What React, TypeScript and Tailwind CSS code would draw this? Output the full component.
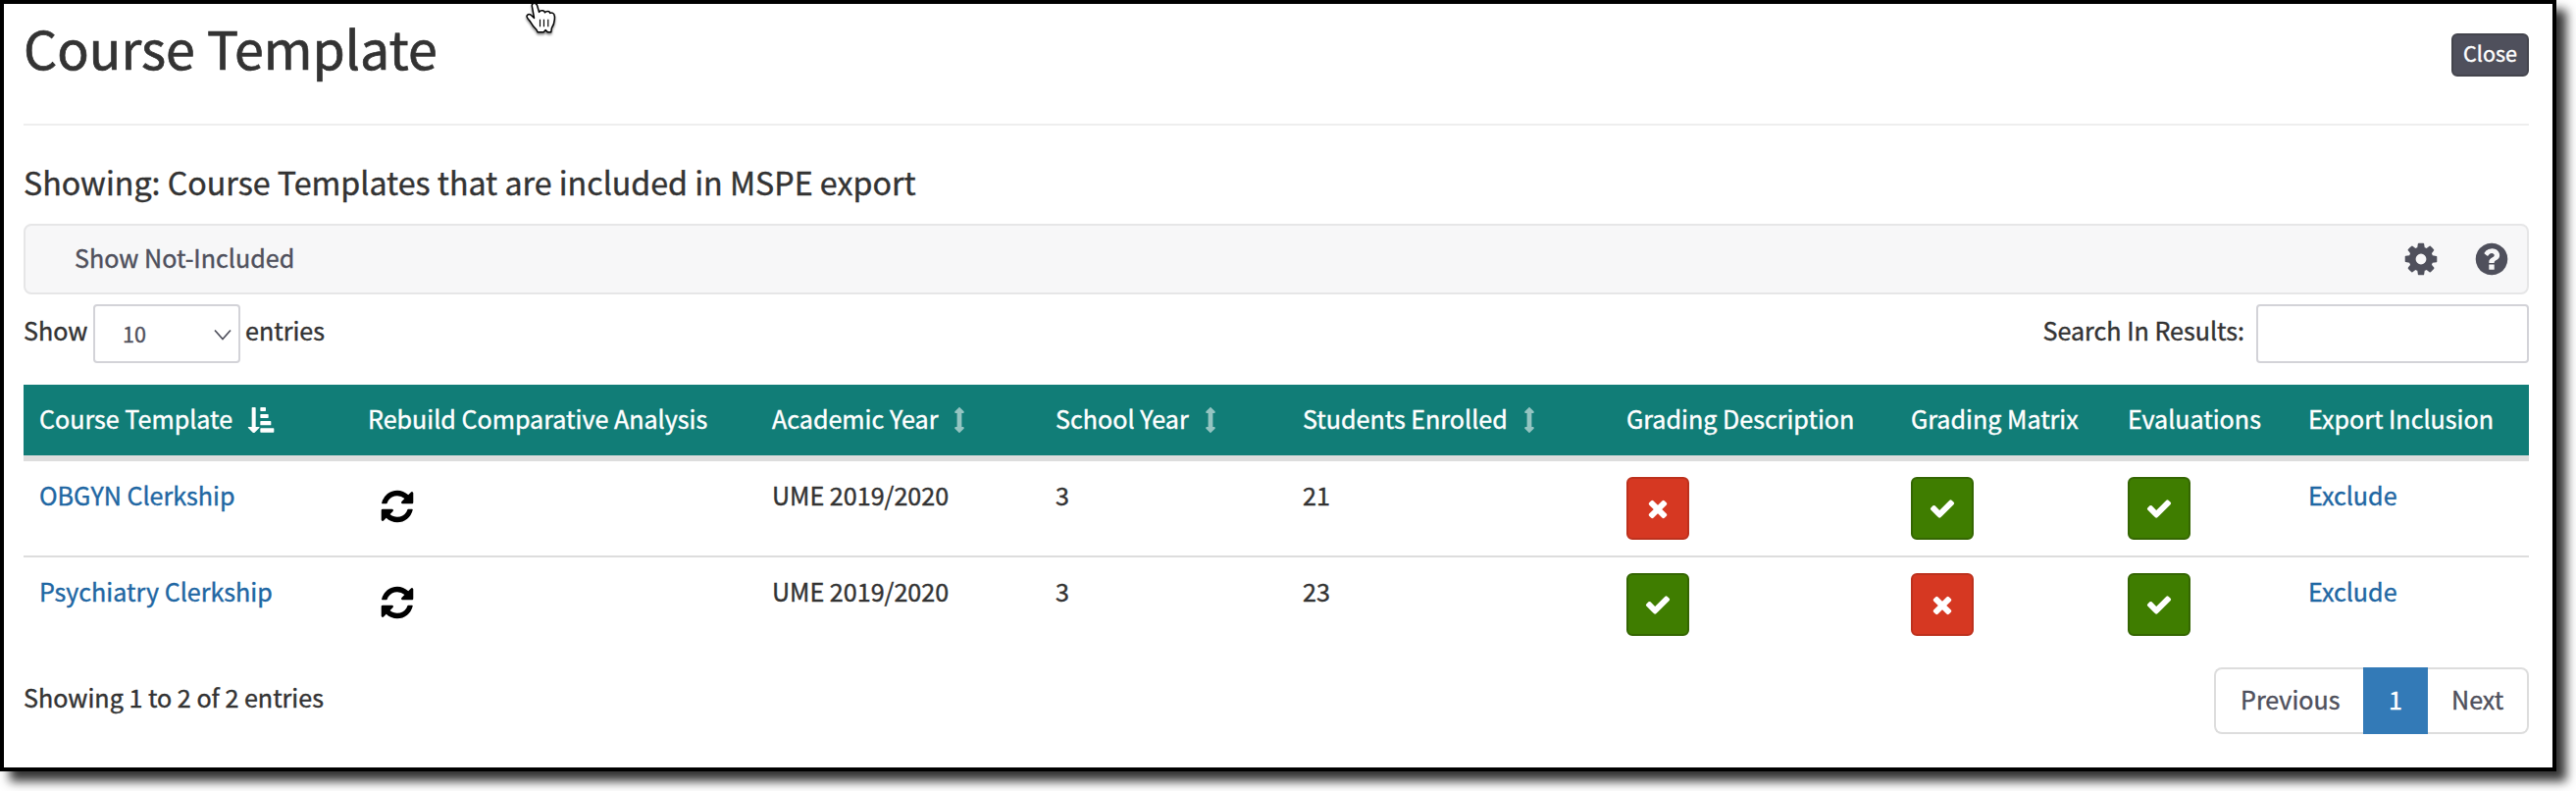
import React from "react";

interface iIcon {
  d: string;
  className: string;
}

interface iColumn {
  label: string;
  width: string;
  sort?: "active" | "idle";
}

interface iRow {
  id: number;
  name: string;
  year: string;
  schoolYear: number;
  enrolled: number;
  description: boolean;
  matrix: boolean;
  evaluations: boolean;
}

const COG =
  "M1152 896q0-106-75-181t-181-75-181 75-75 181 75 181 181 75 181-75 75-181zm512-109v222q0 12-8 23t-20 13l-185 28q-19 54-39 91 35 50 107 138 10 12 10 25t-9 23q-27 37-99 108t-94 71q-12 0-26-9l-138-108q-44 23-91 38-16 136-29 186-7 28-36 28h-222q-14 0-24.5-8.5t-11.5-21.5l-28-184q-49-16-90-37l-141 107q-10 9-25 9-14 0-25-11-126-114-165-168-7-10-7-23 0-12 8-23 15-21 51-66.5t54-70.5q-27-50-41-99l-183-27q-13-2-21-12.5t-8-23.5v-222q0-12 8-23t19-13l186-28q14-46 39-92-40-57-107-138-10-12-10-24 0-10 9-23 26-36 98.5-107.5t94.5-71.5q13 0 26 10l138 107q44-23 91-38 16-136 29-186 7-28 36-28h222q14 0 24.5 8.5t11.5 21.5l28 184q49 16 90 37l142-107q9-9 24-9 13 0 25 10 129 119 165 170 7 8 7 22 0 12-8 23-15 21-51 66.5t-54 70.5q26 50 41 98l183 28q13 2 21 12.5t8 23.5z";
const QUESTION =
  "M1024 1376v-192q0-14-9-23t-23-9h-192q-14 0-23 9t-9 23v192q0 14 9 23t23 9h192q14 0 23-9t9-23zm256-672q0-88-55.5-163t-138.5-116-170-41q-243 0-371 213-15 24 8 42l132 100q7 6 19 6 16 0 25-12 53-68 86-92 34-24 86-24 48 0 85.5 26t37.5 59q0 38-20 61t-68 45q-63 28-115.5 86.5t-52.5 125.5v36q0 14 9 23t23 9h192q14 0 23-9t9-23q0-19 21.5-49.5t54.5-49.5q32-18 49-28.5t46-35 44.5-48 28-60.5 12.5-81zm384 192q0 209-103 385.5t-279.5 279.5-385.5 103-385.5-103-279.5-279.5-103-385.5 103-385.5 279.5-279.5 385.5-103 385.5 103 279.5 279.5 103 385.5z";
const REFRESH =
  "M1639 1056q0 5-1 7-64 268-268 434.5t-478 166.5q-146 0-282.5-55t-243.5-157l-129 129q-19 19-45 19t-45-19-19-45v-448q0-26 19-45t45-19h448q26 0 45 19t19 45-19 45l-137 137q71 66 161 102t187 36q134 0 250-65t186-179q11-17 53-117 8-23 30-23h192q13 0 22.5 9.5t9.5 22.5zm25-800v448q0 26-19 45t-45 19h-448q-26 0-45-19t-19-45 19-45l138-138q-148-137-349-137-134 0-250 65t-186 179q-11 17-53 117-8 23-30 23h-199q-13 0-22.5-9.5t-9.5-22.5v-7q65-268 270-434.5t480-166.5q146 0 284 55.5t245 156.5l130-129q19-19 45-19t45 19 19 45z";
const CHECK =
  "M1671 566q0 40-28 68l-724 724-136 136q-28 28-68 28t-68-28l-136-136-362-362q-28-28-28-68t28-68l136-136q28-28 68-28t68 28l294 295 656-657q28-28 68-28t68 28l136 136q28 28 28 68z";
const TIMES =
  "M1490 1322q0 40-28 68l-136 136q-28 28-68 28t-68-28l-294-294-294 294q-28 28-68 28t-68-28l-136-136q-28-28-28-68t28-68l294-294-294-294q-28-28-28-68t28-68l136-136q28-28 68-28t68 28l294 294 294-294q28-28 68-28t68 28l136 136q28 28 28 68t-28 68l-294 294 294 294q28 28 28 68z";

const columns: iColumn[] = [
  { label: "Course Template", width: "w-[335px]", sort: "active" },
  { label: "Rebuild Comparative Analysis", width: "w-[412px]" },
  { label: "Academic Year", width: "w-[289px]", sort: "idle" },
  { label: "School Year", width: "w-[252px]", sort: "idle" },
  { label: "Students Enrolled", width: "w-[330px]", sort: "idle" },
  { label: "Grading Description", width: "w-[290px]" },
  { label: "Grading Matrix", width: "w-[221px]" },
  { label: "Evaluations", width: "w-[184px]" },
  { label: "Export Inclusion", width: "w-[241px]" },
];

const rows: iRow[] = [
  {
    id: 1,
    name: "OBGYN Clerkship",
    year: "UME 2019/2020",
    schoolYear: 3,
    enrolled: 21,
    description: false,
    matrix: true,
    evaluations: true,
  },
  {
    id: 2,
    name: "Psychiatry Clerkship",
    year: "UME 2019/2020",
    schoolYear: 3,
    enrolled: 23,
    description: true,
    matrix: false,
    evaluations: true,
  },
];

const Icon: React.FC<iIcon> = ({ d, className }) => (
  <svg viewBox="0 0 1792 1792" fill="currentColor" className={className}>
    <path d={d} />
  </svg>
);

const SortActive: React.FC = () => (
  <svg viewBox="36 42 84 84" fill="currentColor" className="h-7 w-7">
    <path d="M50 47q0-2 2-2h8q2 0 2 2v58h10q3 0 1 3l-14 14q-3 2-6 0l-14-14q-2-3 1-3h10z" />
    <rect x="76" y="45" width="17" height="12" rx="2" />
    <rect x="76" y="66" width="25" height="12" rx="2" />
    <rect x="76" y="87" width="33" height="13" rx="2" />
    <rect x="76" y="109" width="42" height="13" rx="2" />
  </svg>
);

const SortIdle: React.FC = () => (
  <svg viewBox="0 0 12 28" fill="currentColor" className="ml-px h-7 w-3 opacity-55">
    <path d="M6 .8 10.6 5.2Q11.2 7 9.8 7H8.4V21H9.8Q11.2 21 10.6 22.8L6 27.2 1.4 22.8Q.8 21 2.2 21H3.6V7H2.2Q.8 7 1.4 5.2Z" />
  </svg>
);

const Status: React.FC<{ ok: boolean }> = ({ ok }) => (
  <button
    className={`flex h-16 w-16 items-center justify-center rounded-md border-2 text-white ${
      ok ? "border-[#346602] bg-[#3f7d00]" : "border-[#bd311d] bg-[#d63822]"
    }`}
  >
    <Icon d={ok ? CHECK : TIMES} className="h-7 w-7" />
  </button>
);

// Hand pointer
const Pointer: React.FC = () => (
  <svg
    viewBox="105 4 100 108"
    className="absolute left-[531px] top-[-3px] h-9 w-[33px] drop-shadow-[0_2px_1px_rgba(0,0,0,0.45)]"
  >
    <path
      d="M127 18Q127 10 134 10T143 17L149 38Q152 32 160 33Q166 34 167 39Q172 33 180 36L183 41Q190 38 195 44Q198 50 197 60Q196 75 188 87L186 100H176L169 93 163 100H145L141 92Q130 82 121 66Q111 56 111 50Q114 42 123 46L134 56Z"
      fill="#fff"
      stroke="#000"
      strokeWidth="4.5"
      strokeLinejoin="round"
    />
    <path d="M152 60V83M164 60V83M177 60V83" stroke="#000" strokeWidth="3.5" />
  </svg>
);

const App: React.FC = () => {
  return (
    <div className="h-[806px] w-[2626px] overflow-hidden bg-white font-['Noto_Sans_CJK_SC','Noto_Sans',sans-serif] text-[25.1px] text-[#333] [-webkit-text-stroke:0.4px]">
      <div className="relative h-[786px] w-[2606px] border-4 border-black bg-white pl-5 pr-6 shadow-[10px_10px_10px_rgba(0,0,0,0.8)]">
        <Pointer />

        <header className="flex h-[124px] items-start justify-between border-b-2 border-[#eee]">
          <h1 className="mt-3.5 text-[53.7px] leading-[60px] [-webkit-text-stroke:0.7px]">
            Course Template
          </h1>
          <button className="mt-[30px] h-11 w-[79px] rounded-md border-2 border-[#44454d] bg-[#4f505c] text-center text-[21.5px] text-white">
            <span className="block h-10 leading-[35px]">Close</span>
          </button>
        </header>

        <h2 className="mt-[37px] text-[32.2px] leading-10">
          Showing: Course Templates that are included in MSPE export
        </h2>

        <div className="mt-[23px] flex h-[72px] justify-between rounded-lg border-2 border-[#e6e6e7] bg-[#f7f7f8] pl-[50px] pr-[17px] text-[#4f505c]">
          <span className="leading-[64px]">Show Not-Included</span>
          <div className="flex items-center gap-[34px]">
            <Icon d={COG} className="h-[38px] w-[38px]" />
            <Icon d={QUESTION} className="h-[38px] w-[38px]" />
          </div>
        </div>

        <div className="mt-2.5 flex h-[60px] items-start justify-between leading-[52px]">
          <div className="flex">
            <span className="w-[65px]">Show</span>
            <div className="ml-1.5 mr-[5px] flex h-[60px] w-[150px] justify-between rounded border-2 border-[#d3d3d8] pl-7 pr-[7px] text-[21.5px] leading-[55px] text-[#4f505c]">
              <span>10</span>
              <svg
                viewBox="0 0 18 12"
                fill="none"
                stroke="currentColor"
                strokeWidth="1.7"
                className="mt-[23px] h-3 w-[18px]"
              >
                <path d="M1 1.5 9 10.5 17 1.5" />
              </svg>
            </div>
            <span>entries</span>
          </div>
          <div className="flex">
            <span>Search In Results:</span>
            <input className="ml-3 h-[60px] w-[278px] rounded border-2 border-[#d3d3d8]" />
          </div>
        </div>

        <table className="mt-[22px] w-[2554px] table-fixed border-separate border-spacing-0 text-left leading-10">
          <thead className="bg-[#117d77] text-white">
            <tr>
              {columns.map((col) => (
                <th
                  key={col.label}
                  className={`h-[78px] border-b-[6px] border-[#ddd] bg-clip-padding px-4 pb-[18px] pt-3.5 align-top font-normal whitespace-nowrap ${col.width}`}
                >
                  <div className="flex items-start gap-[15px]">
                    {col.label}
                    {col.sort && (
                      <span className="mt-2">
                        {col.sort === "active" ? <SortActive /> : <SortIdle />}
                      </span>
                    )}
                  </div>
                </th>
              ))}
            </tr>
          </thead>
          <tbody className="[&_td]:px-4 [&_td]:pt-3.5 [&_td]:align-top [&_tr:first-child_td]:border-b-2 [&_td]:border-[#ddd]">
            {rows.map((row) => (
              <tr key={row.id} className="h-24 first:h-[98px]">
                <td className="text-[#1f67a3]">{row.name}</td>
                <td>
                  <Icon d={REFRESH} className="ml-[11px] mt-[13px] h-[38px] w-[38px] text-black" />
                </td>
                <td>{row.year}</td>
                <td>{row.schoolYear}</td>
                <td>{row.enrolled}</td>
                <td>
                  <div className="mt-0.5"><Status ok={row.description} /></div>
                </td>
                <td>
                  <div className="mt-0.5"><Status ok={row.matrix} /></div>
                </td>
                <td>
                  <div className="mt-0.5"><Status ok={row.evaluations} /></div>
                </td>
                <td className="text-[#1f67a3]">Exclude</td>
              </tr>
            ))}
          </tbody>
        </table>

        <footer className="mt-4 flex items-start justify-between">
          <span className="leading-[60px]">Showing 1 to 2 of 2 entries</span>
          <div className="flex h-[68px] text-[#4f505c] leading-[60px]">
            <span className="w-[152px] rounded-l-lg border-2 border-r-0 border-[#ddd] pl-[25px]">
              Previous
            </span>
            <span className="w-[66px] border-2 border-[#337ab7] bg-[#337ab7] text-center text-white">
              1
            </span>
            <span className="w-[103px] rounded-r-lg border-2 border-l-0 border-[#ddd] pl-6">
              Next
            </span>
          </div>
        </footer>
      </div>
    </div>
  );
};

export default App;
